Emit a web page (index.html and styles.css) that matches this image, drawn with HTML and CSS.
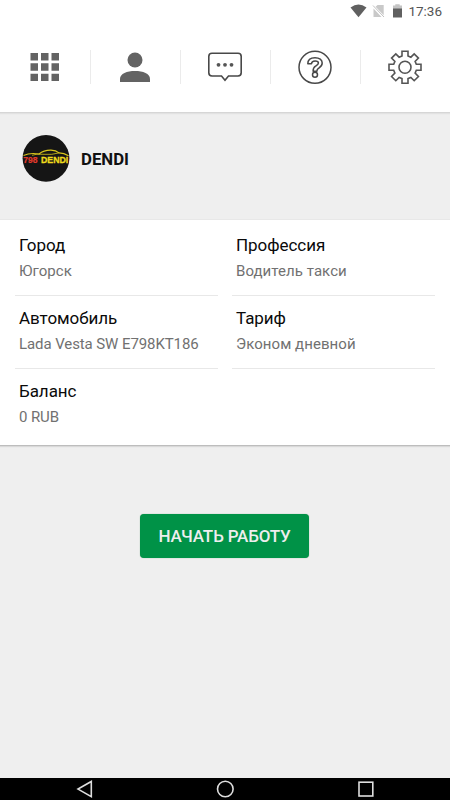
FILE: index.html
```html
<!DOCTYPE html>
<html lang="ru">
<head>
<meta charset="utf-8">
<title>DENDI</title>
<link rel="stylesheet" href="styles.css">
</head>
<body>
<div class="screen">
  <div class="status">
    <svg class="status-icons" width="56" height="22" viewBox="348 0 56 22">
      <path d="M350.500 7.400Q358.500 1.600 366.500 7.400L358.500 17.200Z" fill="#606060"/>
      <path d="M377.500 5H383.700V15.200L375.600 6.800ZM373.500 8.500L381.500 17H373.500Z" fill="#c9c9c9"/>
      <path d="M373 5.500L384 17" stroke="#c0c0c0" stroke-width="1"/>
      <path d="M393 5.500H395.300V4.300H399.700V5.500H402V9H393Z" fill="#c4c4c4"/>
      <path d="M393 8.500H402V17.500H393Z" fill="#606060"/>
    </svg>
    <span class="clock">17:36</span>
  </div>
  <nav class="toolbar">
    <a class="tool">
      <svg width="34" height="34" viewBox="-17 -17 34 34" fill="#636363">
        <path d="M-14.500-14h7.500v7.500h-7.500zM-4-14h7.500v7.500H-4zM6.500-14h7.500v7.500H6.500zM-14.500-3.700h7.500v7.500h-7.500zM-4-3.700h7.500v7.500H-4zM6.500-3.700h7.500v7.500H6.500zM-14.500 6.700h7.500v7.300h-7.500zM-4 6.700h7.500v7.300H-4zM6.500 6.700h7.500v7.300H6.500z"/>
      </svg>
    </a>
    <a class="tool">
      <svg width="34" height="34" viewBox="-17 -17 34 34" fill="#636363">
        <circle cx="0" cy="-7" r="7.500"/>
        <path d="M-15 15V12C-15 6.500-8 4 0 4S15 6.500 15 12V15Z"/>
      </svg>
    </a>
    <a class="tool">
      <svg width="36" height="34" viewBox="-18 -17 36 34" fill="none" stroke="#484848" stroke-width="1.600">
        <path d="M-13-13.700H13Q16.200-13.700 16.200-10.500V5.800Q16.200 9 13 9H3.500L0 13.300L-3.500 9H-13Q-16.200 9-16.200 5.800V-10.500Q-16.200-13.700-13-13.700Z"/>
        <g fill="#555" stroke="none"><circle cx="-6.500" cy="-2.200" r="1.900"/><circle cx="0" cy="-2.200" r="1.900"/><circle cx="6.500" cy="-2.200" r="1.900"/></g>
      </svg>
    </a>
    <a class="tool">
      <svg width="36" height="36" viewBox="-18 -18 36 36" fill="none" stroke="#484848">
        <circle cx="0" cy="0.300" r="16" stroke-width="1.500"/>
        <path d="M-7.200-3.200C-7.200-7.200-4.200-9.300 0-9.300C4.400-9.300 7.200-7.200 7.200-3.900C7.200-.8 5.200.3 3.400 1.400C2.100 2.200 1.900 2.900 1.900 4.300H-1.900C-2 1.500-1.300.3.500-.9C2.200-2 3.400-2.600 3.400-4C3.400-5.400 2-6.100.1-6.100C-2-6.100-3.400-5-3.500-3.200Z" stroke-width="1.500" stroke-linejoin="round"/>
        <circle cx="0" cy="7.800" r="2.500" stroke-width="1.500"/>
      </svg>
    </a>
    <a class="tool">
      <svg width="36" height="36" viewBox="-18 -18 36 36" fill="none" stroke="#555" stroke-width="1.600">
        <g transform="translate(0 .3)">
          <path d="M-3-11.300V-16H3V-11.300L5.870-10.110L9.190-13.430L13.430-9.190L10.110-5.870L11.300-3H16V3H11.300L10.110 5.870L13.430 9.190L9.190 13.430L5.870 10.110L3 11.300V16H-3V11.300L-5.870 10.110L-9.190 13.430L-13.430 9.190L-10.110 5.870L-11.300 3H-16V-3H-11.300L-10.110-5.870L-13.430-9.190L-9.190-13.430L-5.870-10.110Z"/>
          <circle cx="0" cy="0" r="6"/>
        </g>
      </svg>
    </a>
  </nav>
  <header class="profile">
    <svg class="avatar" width="48" height="48" viewBox="0 0 48 48">
      <circle cx="24" cy="24.300" r="23.400" fill="#151515"/>
      <path d="M1.500 21.500Q8 18.500 17 20Q22 16 29 16.200Q34 16.500 37 18.900Q42 19 46.500 21.800" fill="none" stroke="#d8c51c" stroke-width="1.200"/>
      <path d="M10 21.300Q14 19.500 22 20.300Q30 21 37 18.900" fill="none" stroke="#d8c51c" stroke-width=".8"/>
      <text x="1.300" y="29.400" class="logo-number" textLength="14.300" lengthAdjust="spacingAndGlyphs">798</text>
      <text x="19" y="29.400" class="logo-name" textLength="27.300" lengthAdjust="spacingAndGlyphs">DENDI</text>
    </svg>
    <h1 class="name">DENDI</h1>
  </header>
  <section class="card">
    <div class="field"><div class="label">Город</div><div class="value">Югорск</div></div>
    <div class="field"><div class="label">Профессия</div><div class="value">Водитель такси</div></div>
    <div class="field"><div class="label">Автомобиль</div><div class="value car">Lada Vesta SW E798KT186</div></div>
    <div class="field"><div class="label">Тариф</div><div class="value">Эконом дневной</div></div>
    <div class="field last"><div class="label">Баланс</div><div class="value car">0 RUB</div></div>
  </section>
  <main class="action"><button class="start">НАЧАТЬ РАБОТУ</button></main>
  <footer class="navbar">
    <svg width="450" height="22" viewBox="0 778 450 22" fill="none" stroke="#dedede" stroke-width="1.600">
      <path d="M91.300 781.500V796.700L78 789.100Z"/>
      <circle cx="225.300" cy="789" r="7.800"/>
      <rect x="359" y="782.200" width="13.800" height="13.800"/>
    </svg>
  </footer>
</div>
</body>
</html>
```

FILE: styles.css
```css
* { box-sizing: border-box; }
body { margin: 0; font-family: Roboto, "Noto Sans", sans-serif; }
svg { display: block; }
.screen {
  width: 450px;
  height: 800px;
  display: flex;
  flex-direction: column;
  overflow: hidden;
  background: #efefef;
}
.status {
  height: 22px;
  flex: none;
  display: flex;
  justify-content: flex-end;
  gap: 4px;
  padding-right: 8px;
  background: #fff;
}
.clock { font-size: 13.5px; line-height: 23px; color: #555; }
.toolbar {
  height: 91px;
  flex: none;
  display: grid;
  grid-template-columns: repeat(5, 90px);
  align-items: center;
  background: #fff;
  border-bottom: 1px solid #d6d6d6;
  box-shadow: 0 1px 1px #e2e2e2;
}
.tool {
  height: 34px;
  display: flex;
  align-items: center;
  justify-content: center;
}
.tool + .tool { border-left: 1px solid #ebebeb; padding-right: 1px; }
.profile {
  height: 106px;
  flex: none;
  display: flex;
  align-items: flex-start;
  gap: 11px;
  padding: 21px 22px 0;
}
.avatar { overflow: visible; }
.name { margin: 0; font-size: 16.8px; line-height: 50px; font-weight: 700; color: #111; }
.logo-number { font: 700 9.5px "Liberation Sans", sans-serif; fill: #e33a2c; stroke: #e33a2c; stroke-width: .2px; }
.logo-name { font: 700 9.5px "Liberation Sans", sans-serif; fill: #f0dc1c; stroke: #f0dc1c; stroke-width: .3px; }
.card {
  height: 227px;
  flex: none;
  display: grid;
  grid-template-columns: 203px 203px;
  grid-auto-rows: 73px;
  column-gap: 14px;
  padding: 3px 15px 0;
  background: #fff;
  border-top: 1px solid #e8e8e8;
  border-bottom: 1px solid #bdbdbd;
  box-shadow: 0 1px 1px #d9d9d9;
}
.field { padding: 10px 4px 0; border-bottom: 1px solid #e8e8e8; white-space: nowrap; }
.last { border-bottom: 0; }
.label { font-size: 17px; line-height: 24px; letter-spacing: -.05px; color: #0a0a0a; }
.value { font-size: 15px; line-height: 28px; letter-spacing: .06px; color: #717171; }
.car { letter-spacing: -.09px; }
.action { flex: 1; display: flex; align-items: flex-start; justify-content: center; padding: 68px 1px 0 0; }
.start {
  width: 169px;
  height: 44px;
  padding: 0;
  border: 0;
  border-radius: 4px;
  background: #009247;
  color: #eee;
  font: 500 17px Roboto, sans-serif;
  letter-spacing: -.18px;
  box-shadow: 0 0 1px #6ca67e;
}
.navbar { height: 22px; flex: none; background: #000; }
```
